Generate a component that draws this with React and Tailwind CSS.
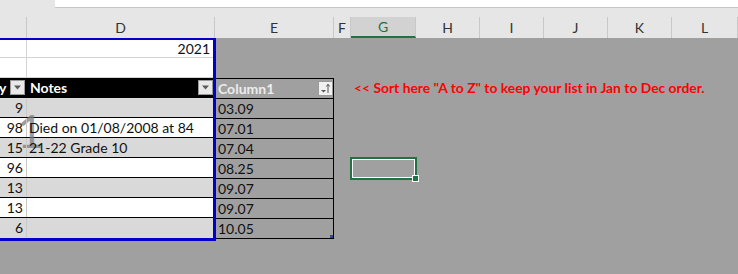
import React from 'react';

const cols = [
  { key: 'C', w: 'w-[27px]', label: '' },
  { key: 'D', w: 'w-[188px]', label: 'D' },
  { key: 'E', w: 'w-[119px]', label: 'E' },
  { key: 'F', w: 'w-[17px]', label: 'F' },
  { key: 'G', w: 'w-[65px]', label: 'G', active: true },
  { key: 'H', w: 'w-[64px]', label: 'H' },
  { key: 'I', w: 'w-[64px]', label: 'I' },
  { key: 'J', w: 'w-[64px]', label: 'J' },
  { key: 'K', w: 'w-[64px]', label: 'K' },
  { key: 'L', w: 'w-[66px]', label: 'L' },
];

const rows = [
  { qty: '9', note: '', date: '03.09', shade: true },
  { qty: '98', note: 'Died on 01/08/2008 at 84', date: '07.01', shade: false },
  { qty: '15', note: '21-22 Grade 10', date: '07.04', shade: true },
  { qty: '96', note: '', date: '08.25', shade: false },
  { qty: '13', note: '', date: '09.07', shade: true },
  { qty: '13', note: '', date: '09.07', shade: false },
  { qty: '6', note: '', date: '10.05', shade: true },
];

function FilterButton() {
  return (
    <div className="w-[15px] h-[15px] bg-[#e9e9e9] border border-[#9a9a9a] flex items-center justify-center shrink-0">
      <svg width="9" height="5" viewBox="0 0 9 5">
        <path d="M1 0.5h7L4.5 4.5z" fill="#5a5a5a" />
      </svg>
    </div>
  );
}

function SortButton() {
  return (
    <div className="w-[15px] h-[15px] bg-[#f2f2f2] border border-[#9a9a9a] flex items-center justify-center shrink-0">
      <svg width="11" height="11" viewBox="0 0 11 11">
        <path d="M1 7h5L3.5 9.5z" fill="#555" />
        <path d="M8 10V1.5" stroke="#555" strokeWidth="1" />
        <path d="M6.3 3.5L8 1.2l1.7 2.3" stroke="#555" strokeWidth="1" fill="none" />
      </svg>
    </div>
  );
}

export default function App() {
  return (
    <div className="relative w-[738px] h-[274px] overflow-hidden bg-[#a0a0a0] font-['Lato',sans-serif] text-[14px] leading-none">
      {/* formula bar edge */}
      <div className="flex h-[8px] bg-[#e6e6e6]">
        <div className="w-[55px]" />
        <div className="flex-1 bg-white border-b border-[#c6c6c6]" />
      </div>
      <div className="h-[9px] bg-[#e6e6e6]" />

      {/* column letters */}
      <div className="flex h-[21px] bg-[#e6e6e6]">
        {cols.map((c) => (
          <div
            key={c.key}
            className={
              c.active
                ? `${c.w} shrink-0 flex items-center justify-center bg-[#d2d2d2] text-[#217346] border-b-2 border-[#217346] border-r border-r-[#c8c8c8]`
                : `${c.w} shrink-0 flex items-center justify-center text-[#333] border-r border-[#c8c8c8]`
            }
          >
            {c.label}
          </div>
        ))}
      </div>

      <div className="flex">
        {/* print area, columns C:D */}
        <div className="relative w-[216px] shrink-0 border-t-2 border-r-[3px] border-b-[3px] border-[#0000c8] bg-white text-[#111]">
          <div className="flex h-[18px] border-b border-[#d4d4d4]">
            <div className="w-[27px] border-r border-[#d4d4d4]" />
            <div className="flex-1 flex items-center justify-end pr-[3px]">2021</div>
          </div>
          <div className="flex h-[20px] border-b border-[#d4d4d4]">
            <div className="w-[27px] border-r border-[#d4d4d4]" />
            <div className="flex-1" />
          </div>
          <div className="flex h-[20px] bg-black text-white font-bold border-b border-black">
            <div className="w-[27px] flex items-center justify-between pr-[2px]">
              <span className="-ml-[1px]">y</span>
              <FilterButton />
            </div>
            <div className="flex-1 flex items-center justify-between pl-[3px]">
              <span>Notes</span>
              <FilterButton />
            </div>
          </div>

          {/* page number watermark, drawn under the cell text */}
          <div className="absolute left-[17px] top-[68px] text-[46px] text-[#7c7c7c]/75 pointer-events-none">1</div>

          {rows.map((r, i) => (
            <div
              key={i}
              className={`flex h-[20px] ${r.shade ? 'bg-[#d9d9d9]' : 'bg-white'} ${i < rows.length - 1 ? 'border-b border-black' : ''}`}
            >
              <div className="relative z-10 w-[27px] flex items-center justify-end pr-[3px] border-r border-[#c8c8c8]">{r.qty}</div>
              <div className="relative z-10 flex-1 flex items-center pl-[2px] whitespace-nowrap">{r.note}</div>
            </div>
          ))}
        </div>

        {/* column E */}
        <div className="w-[118px] shrink-0 border-r border-black self-start mt-[40px] border-t text-[#111]">
          <div className="flex items-center justify-between h-[20px] border-b border-black pl-[2px] font-bold text-[#ececec]">
            <span>Column1</span>
            <SortButton />
          </div>
          {rows.map((r, i) => (
            <div key={i} className="relative h-[20px] border-b border-black flex items-center pl-[2px]">
              {r.date}
              {i === rows.length - 1 && (
                <span className="absolute right-0 bottom-0 w-[3px] h-[3px] bg-[#3344aa]" />
              )}
            </div>
          ))}
        </div>

        {/* rest of sheet */}
        <div className="flex-1 flex flex-col">
          <div className="h-[40px]" />
          <div className="h-[20px] flex items-center pl-[20px] text-[13.85px] text-[#ff0000] font-bold whitespace-nowrap">
            &lt;&lt; Sort here "A to Z" to keep your list in Jan to Dec order.
          </div>
          <div className="h-[59px]" />
          <div className="relative ml-[16px] w-[67px] h-[23px] border-2 border-[#217346]">
            <div className="w-full h-full border border-white" />
            <span className="absolute -right-[4px] -bottom-[4px] w-[7px] h-[7px] bg-[#217346] border border-white" />
          </div>
        </div>
      </div>
    </div>
  );
}
